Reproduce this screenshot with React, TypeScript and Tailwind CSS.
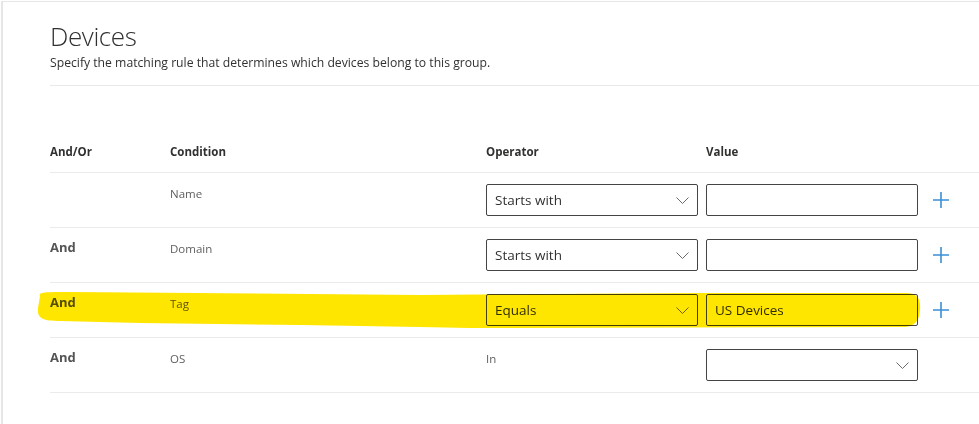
type Row = {
  andOr: string;
  condition: string;
  operator: string | null;
  opText?: string;
  value: string;
  valueSelect?: boolean;
  add: boolean;
};

const rows: Row[] = [
  { andOr: '', condition: 'Name', operator: 'Starts with', value: '', add: true },
  { andOr: 'And', condition: 'Domain', operator: 'Starts with', value: '', add: true },
  { andOr: 'And', condition: 'Tag', operator: 'Equals', value: 'US Devices', add: true },
  { andOr: 'And', condition: 'OS', operator: null, opText: 'In', value: '', valueSelect: true, add: false },
];

const cols = 'grid grid-cols-[120px_316px_220px_212px_1fr]';

function Chevron() {
  return (
    <svg width="13" height="7" viewBox="0 0 13 7">
      <path d="M0.5 0.5l6 6 6-6" stroke="#6b6b6b" strokeWidth="1" fill="none" />
    </svg>
  );
}

function Plus() {
  return (
    <svg width="18" height="18" viewBox="0 0 18 18" className="mt-[7px] ml-[14px]">
      <path d="M9 1v16M1 9h16" stroke="#3b8fd6" strokeWidth="1.6" fill="none" />
    </svg>
  );
}

export default function App() {
  return (
    <div className="relative w-[979px] h-[424px] bg-white pt-px pl-px overflow-hidden" style={{ fontFamily: '"Open Sans", "Noto Sans", sans-serif' }}>
      <div className="h-full border-l-2 border-t border-[#e6e6e6] pl-[47px] text-[#323130]">
        <h1 className="text-[26px] leading-[32px] mt-[18px] font-light tracking-[-0.4px]">Devices</h1>
        <p className="text-[12.2px] leading-[16px] mt-[3px]">Specify the matching rule that determines which devices belong to this group.</p>
        <div className="mt-[14px] border-t border-[#e8e8e8]" />

        <div className={`${cols} mt-[58px] h-[29px] border-b border-[#ebebeb] text-[11.5px] font-bold leading-[16px]`}>
          <div>And/Or</div>
          <div>Condition</div>
          <div>Operator</div>
          <div>Value</div>
        </div>

        {rows.map((r, i) => (
          <div key={i} className={`${cols} h-[55px] border-b border-[#ebebeb]`}>
            <div className="pt-[11px] text-[13px] font-bold text-[#555] leading-[16px]">{r.andOr}</div>
            <div className="pt-[13px] text-[11.5px] text-[#605e5c] leading-[16px]">{r.condition}</div>
            <div className="pt-[11px]">
              {r.operator ? (
                <div className="w-[212px] h-[32px] border border-[#444] rounded-[2px] flex items-center justify-between pl-[8px] pr-[8px] text-[13.5px]">
                  <span>{r.operator}</span>
                  <Chevron />
                </div>
              ) : (
                <div className="pt-[2px] text-[11.5px] text-[#605e5c] leading-[16px]">{r.opText}</div>
              )}
            </div>
            <div className="pt-[11px]">
              <div className="w-[212px] h-[32px] border border-[#444] rounded-[2px] flex items-center justify-between pl-[8px] pr-[8px] text-[13.5px]">
                <span>{r.value}</span>
                {r.valueSelect && <Chevron />}
              </div>
            </div>
            <div className="pt-[11px]">{r.add && <Plus />}</div>
          </div>
        ))}
      </div>

      <svg className="absolute left-0 top-0 pointer-events-none mix-blend-multiply" width="979" height="424">
        <path
          d="M40 296 C38 292 46 292 70 292 L420 295 L700 293 L906 293 C918 293 921 300 920 310 C919 320 916 326 905 327 L470 328 L420 327 L300 325 L140 323 L60 321 C42 321 37 318 38 308 Z"
          fill="#ffe600"
        />
      </svg>
    </div>
  );
}
